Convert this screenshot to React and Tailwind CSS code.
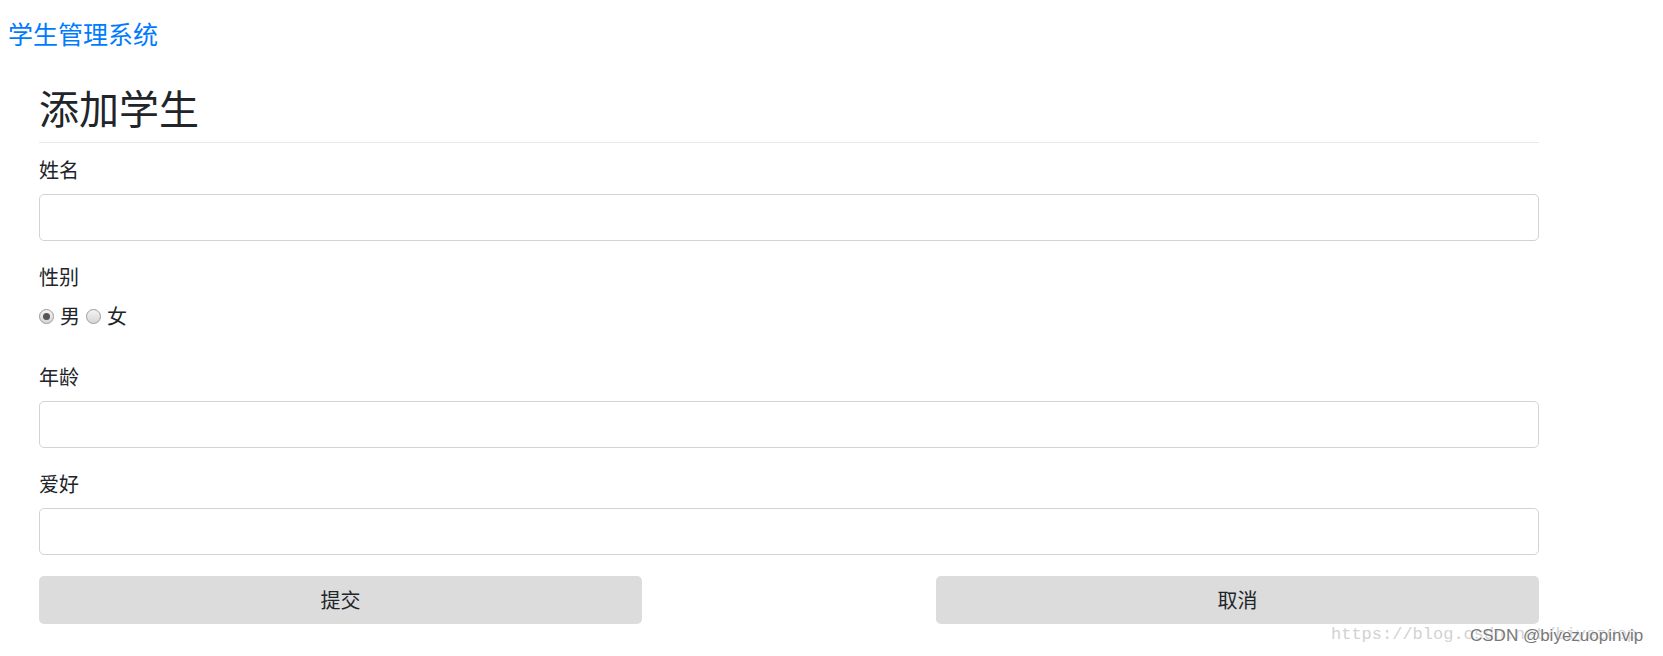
import { useState } from "react";

const FONT = { fontFamily: '"Noto Sans CJK SC", "Noto Sans", sans-serif' };

function Radio({ checked, onClick }) {
  return (
    <span
      onClick={onClick}
      className="w-[15px] h-[15px] rounded-full border border-[#9a9a9a] bg-gradient-to-b from-[#f4f4f4] to-[#d6d6d6] flex items-center justify-center shrink-0 cursor-pointer"
    >
      {checked && <span className="w-[7px] h-[7px] rounded-full bg-[#555]" />}
    </span>
  );
}

function Field({ label, className = "" }) {
  return (
    <div className={className}>
      <label className="block text-[20px] leading-[30px] text-[#212529]">{label}</label>
      <input
        type="text"
        className="mt-[9px] block w-full h-[47px] border border-[#ced4da] rounded-[5px] px-[15px] text-[20px] text-[#495057] focus:outline-none"
      />
    </div>
  );
}

export default function App() {
  const [sex, setSex] = useState("male");

  return (
    <div className="relative h-[656px] bg-white overflow-hidden" style={FONT}>
      {/* Brand */}
      <div className="pt-[18px] pl-[8px]">
        <a className="block text-[25px] leading-[30px] text-[#007bff]">学生管理系统</a>
      </div>

      <div className="ml-[39px] w-[1500px]">
        <h2 className="mt-[35px] text-[40px] leading-[48px] text-[#212529] font-normal">添加学生</h2>
        <hr className="mt-[11px] border-0 border-t border-[#e9e9e9]" />

        <form onSubmit={(e) => e.preventDefault()}>
          <Field label="姓名" className="mt-[12px]" />

          {/* Sex */}
          <div className="mt-[21px]">
            <label className="block text-[20px] leading-[30px] text-[#212529]">性别</label>
            <div className="mt-[9px] flex items-center h-[30px] text-[20px] text-[#212529]">
              <Radio checked={sex === "male"} onClick={() => setSex("male")} />
              <span className="ml-[6px] mr-[6px]">男</span>
              <Radio checked={sex === "female"} onClick={() => setSex("female")} />
              <span className="ml-[6px]">女</span>
            </div>
          </div>

          <Field label="年龄" className="mt-[31px]" />
          <Field label="爱好" className="mt-[21px]" />

          <div className="mt-[21px] flex justify-between">
            <button
              type="submit"
              className="w-[603px] h-[48px] rounded-[5px] bg-[#dcdcdc] text-[20px] text-[#212529]"
            >
              提交
            </button>
            <button
              type="button"
              className="w-[603px] h-[48px] rounded-[5px] bg-[#dcdcdc] text-[20px] text-[#212529]"
            >
              取消
            </button>
          </div>
        </form>
      </div>

      {/* Watermark */}
      <div className="absolute left-[1331px] top-[623px] h-[24px] w-[332px]">
        <span
          className="absolute left-0 top-0 text-[17px] leading-[24px] text-[#d2d2d2] whitespace-nowrap"
          style={{ fontFamily: '"Liberation Mono", monospace' }}
        >
          https://blog.csdn.net/biyezuop
        </span>
        <span
          className="absolute left-[139px] top-[1px] text-[17px] leading-[24px] text-[#777] whitespace-nowrap [text-shadow:0_0_2px_#fff,0_0_1px_#fff]"
          style={{ fontFamily: '"Liberation Sans", Arial, sans-serif' }}
        >
          CSDN @biyezuopinvip
        </span>
      </div>
    </div>
  );
}
